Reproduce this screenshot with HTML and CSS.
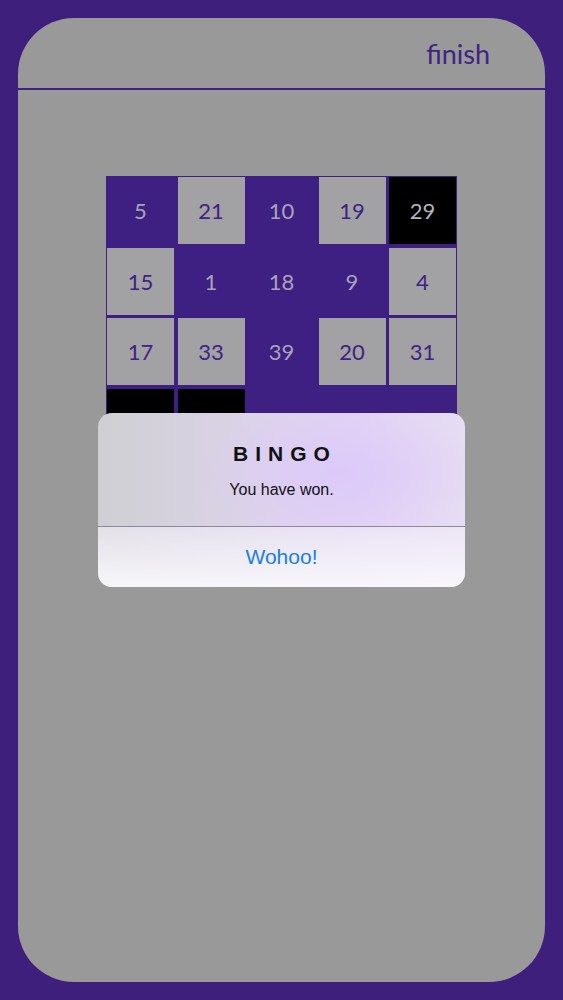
FILE: index.html
```html
<!DOCTYPE html>
<html>
<head>
<meta charset="utf-8">
<link rel="stylesheet" href="styles.css">
</head>
<body>
<div class="screen">
  <div class="card">
    <header class="topbar">
      <span class="finish">finish</span>
    </header>
    <div class="content">
      <div class="board">
        <div class="cell marked">5</div>
        <div class="cell">21</div>
        <div class="cell marked">10</div>
        <div class="cell">19</div>
        <div class="cell black">29</div>

        <div class="cell">15</div>
        <div class="cell marked">1</div>
        <div class="cell marked">18</div>
        <div class="cell marked">9</div>
        <div class="cell">4</div>

        <div class="cell">17</div>
        <div class="cell">33</div>
        <div class="cell marked">39</div>
        <div class="cell">20</div>
        <div class="cell">31</div>

        <div class="cell black"></div>
        <div class="cell black"></div>
        <div class="cell marked"></div>
        <div class="cell marked"></div>
        <div class="cell marked"></div>

        <div class="cell"></div>
        <div class="cell"></div>
        <div class="cell marked"></div>
        <div class="cell"></div>
        <div class="cell"></div>
      </div>
    </div>
  </div>

  <div class="alert">
    <div class="alert-body">
      <div class="alert-title">BINGO</div>
      <div class="alert-msg">You have won.</div>
    </div>
    <div class="alert-btn">Wohoo!</div>
  </div>
</div>
</body>
</html>
```

FILE: styles.css
```css
html, body {
  margin: 0;
  padding: 0;
}
body {
  background: #3e1f7c;
  width: 563px;
  height: 1000px;
  overflow: hidden;
  font-family: "Lato", "Open Sans", sans-serif;
}
.screen {
  position: relative;
  padding: 18px;
  box-sizing: border-box;
  height: 1000px;
}
.card {
  background: #9a999a;
  border-radius: 56px;
  height: 964px;
  width: 527px;
  display: flex;
  flex-direction: column;
  overflow: hidden;
}
.topbar {
  height: 70px;
  border-bottom: 2px solid #3e2380;
  display: flex;
  align-items: center;
  justify-content: flex-end;
  padding-right: 55px;
  flex-shrink: 0;
}
.finish {
  color: #3f2484;
  font-size: 27px;
  font-family: "Lato", sans-serif;
  margin-top: 1px;
}
.content {
  padding-top: 86px;
  padding-left: 88px;
}
.board {
  display: grid;
  grid-template-columns: repeat(5, 67px);
  grid-auto-rows: 67px;
  gap: 3.5px;
  padding: 1px;
  background: #3e1f82;
  width: max-content;
}
.cell {
  background: #a2a1a3;
  color: #3f2285;
  display: flex;
  align-items: center;
  justify-content: center;
  font-size: 22px;
  font-family: "Lato", sans-serif;
}
.cell.marked {
  background: #3e1f82;
  color: #a9a3b8;
}
.cell.black {
  background: #000;
  color: #b6b3bb;
}

.alert {
  position: absolute;
  left: 98px;
  top: 413px;
  width: 367px;
  height: 174px;
  border-radius: 14px;
  overflow: hidden;
  display: flex;
  flex-direction: column;
  font-family: "Liberation Sans", "Roboto", sans-serif;
  background:
    radial-gradient(ellipse 140px 70px at 240px 60px, rgba(220,200,250,0.9), rgba(220,200,250,0) 100%),
    linear-gradient(90deg, #cfcfd2 0%, #dcd3ea 45%, #e1d3f4 70%, #e6dcf3 100%);
}
.alert-body {
  height: 114px;
  border-bottom: 1px solid #8d889e;
  display: flex;
  flex-direction: column;
  align-items: center;
  box-sizing: border-box;
  padding-top: 29px;
}
.alert-title {
  font-size: 21px;
  font-weight: bold;
  letter-spacing: 7px;
  margin-right: -7px;
  color: #111;
  line-height: 24px;
}
.alert-msg {
  font-size: 16px;
  color: #111;
  margin-top: 15px;
  line-height: 18px;
}
.alert-btn {
  flex: 1;
  display: flex;
  align-items: center;
  justify-content: center;
  font-size: 21px;
  color: #1a7fe0;
  background: linear-gradient(180deg, rgba(240,236,246,0.6), rgba(250,250,252,0.9));
}
```
